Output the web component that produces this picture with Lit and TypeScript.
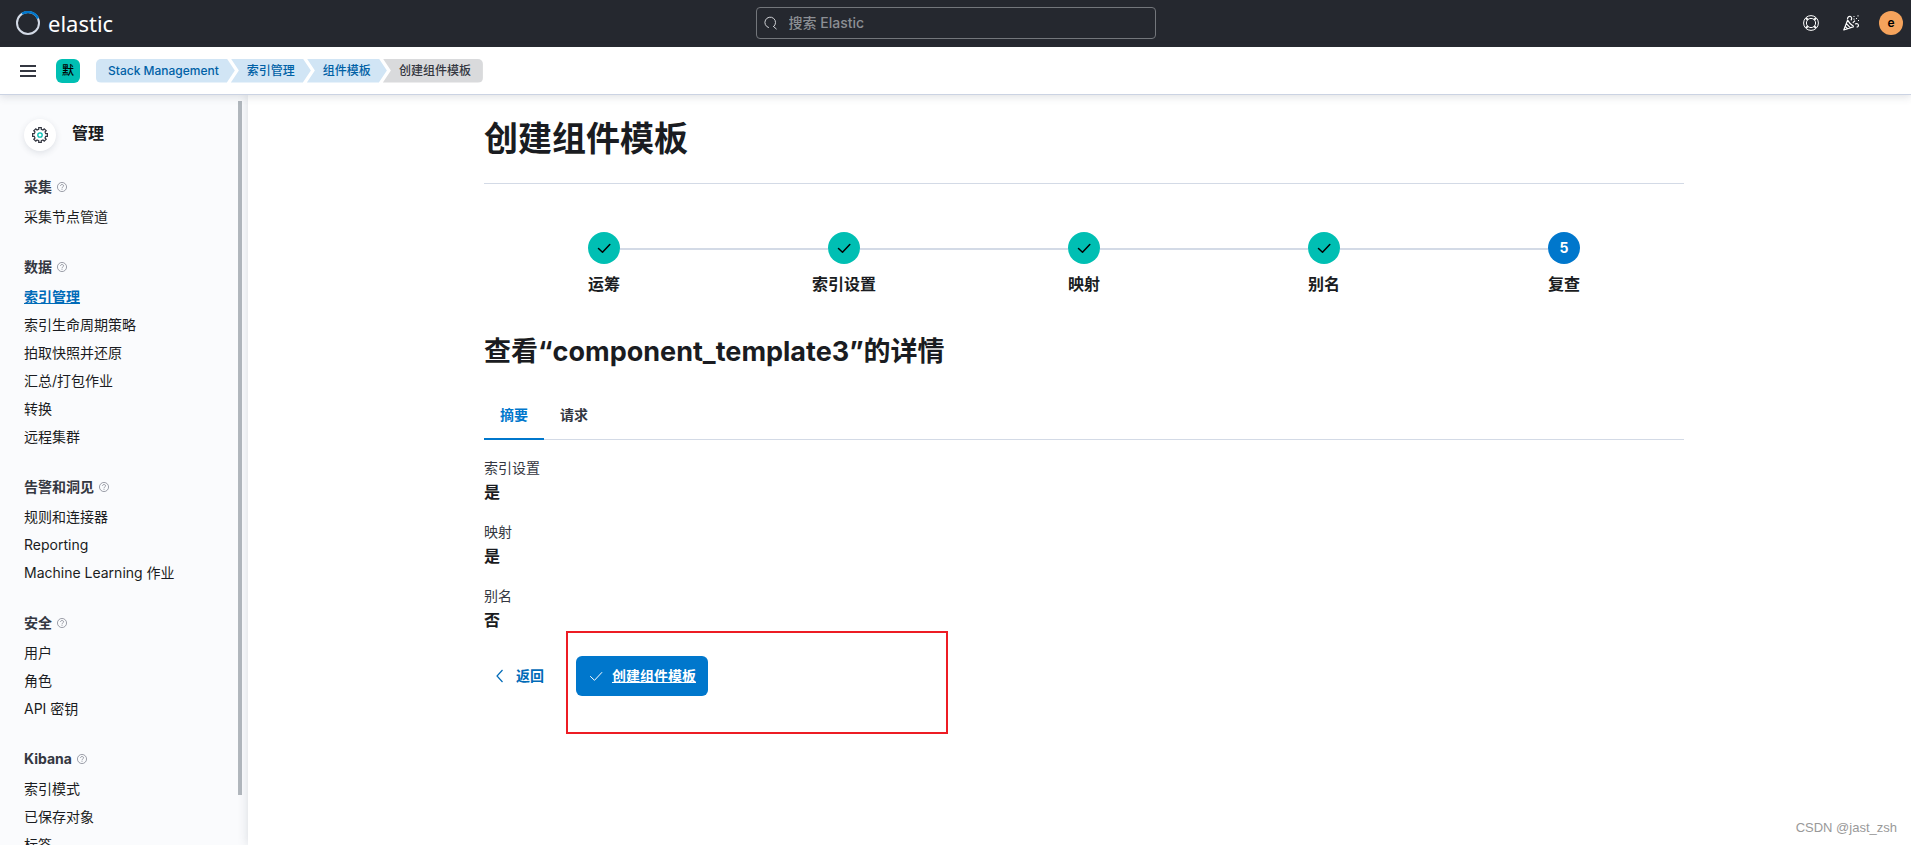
import { LitElement, html, css, svg, nothing } from "lit";
import { customElement } from "lit/decorators.js";
import { classMap } from "lit/directives/class-map.js";

interface NavSection {
  title: string;
  items: string[];
}

const CRUMBS = ["Stack Management", "索引管理", "组件模板", "创建组件模板"];

const SECTIONS: NavSection[] = [
  { title: "采集", items: ["采集节点管道"] },
  {
    title: "数据",
    items: ["索引管理", "索引生命周期策略", "拍取快照并还原", "汇总/打包作业", "转换", "远程集群"],
  },
  { title: "告警和洞见", items: ["规则和连接器", "Reporting", "Machine Learning 作业"] },
  { title: "安全", items: ["用户", "角色", "API 密钥"] },
  { title: "Kibana", items: ["索引模式", "已保存对象", "标签"] },
];

const STEPS = ["运筹", "索引设置", "映射", "别名", "复查"];

const SUMMARY = [
  ["索引设置", "是"],
  ["映射", "是"],
  ["别名", "否"],
];

const checkPath = svg`<path d="M2.5 8.500 6.500 12.300 13.800 4.500" fill="none" stroke="currentColor" stroke-linecap="round" stroke-linejoin="round"/>`;

const base = css`
  * {
    box-sizing: border-box;
    margin: 0;
    padding: 0;
  }
  button,
  input {
    font: inherit;
    color: inherit;
    background: none;
    border: 0;
  }
  a {
    color: inherit;
    text-decoration: none;
  }
  ul,
  ol {
    list-style: none;
  }
  svg {
    display: block;
    flex: none;
  }
`;

@customElement("kbn-header")
class KbnHeader extends LitElement {
  static styles = [
    base,
    css`
      :host {
        display: block;
        position: relative;
        z-index: 2;
      }
      .top {
        display: grid;
        grid-template-columns: 1fr 400px 1fr;
        align-items: center;
        height: 47px;
        padding: 0 8px 1px;
        background: #25282f;
        color: #fff;
      }
      .logo {
        display: flex;
        align-items: center;
        gap: 8px;
        padding-left: 8px;
        font: 22px/24px "Noto Sans", sans-serif;
      }
      .search {
        display: flex;
        align-items: center;
        gap: 11px;
        height: 32px;
        padding: 0 7px;
        border: 1px solid #73767b;
        border-radius: 4px;
      }
      .search input {
        flex: 1;
        min-width: 0;
        outline: 0;
        font-weight: 500;
      }
      .search input::placeholder {
        color: #8c8f94;
        opacity: 1;
      }
      .actions {
        display: flex;
        justify-content: flex-end;
        align-items: center;
        gap: 24px;
      }
      .actions button {
        display: block;
      }
      .actions .user {
        width: 24px;
        height: 24px;
        margin-left: -4px;
        border-radius: 50%;
        background: #f5a35c;
        color: #000;
        font-size: 12px;
        line-height: 24px;
        font-weight: 600;
      }
      .bar {
        display: flex;
        align-items: center;
        height: 48px;
        padding: 0 20px;
        background: #fff;
        border-bottom: 1px solid #cbd3e3;
        box-shadow: 0 2px 8px rgba(60, 70, 90, 0.16);
      }
      .space {
        width: 24px;
        height: 24px;
        margin: 0 16px 0 20px;
        border-radius: 6px;
        background: #00bfb3;
        color: #000;
        font-size: 12px;
        line-height: 24px;
        font-weight: 500;
      }
      .crumbs {
        display: flex;
        font-size: 12px;
        line-height: 24px;
        font-weight: 500;
      }
      .crumb {
        height: 24px;
        padding: 0 16px;
        margin-left: -4px;
        background: #d1e5f5;
        color: #0061a6;
        clip-path: polygon(0 0, calc(100% - 8px) 0, 100% 50%, calc(100% - 8px) 100%, 0 100%, 8px 50%);
      }
      .crumb.first {
        margin-left: 0;
        padding-left: 12px;
        border-radius: 5px 0 0 5px;
        clip-path: polygon(0 0, calc(100% - 8px) 0, 100% 50%, calc(100% - 8px) 100%, 0 100%);
      }
      .crumb.last {
        padding-right: 12px;
        border-radius: 0 5px 5px 0;
        background: #d9dadc;
        color: #343741;
        clip-path: polygon(0 0, 100% 0, 100% 100%, 0 100%, 8px 50%);
      }
    `,
  ];

  render() {
    const last = CRUMBS.length - 1;
    return html`
      <header>
        <div class="top">
          <a class="logo" href="#">
            <svg width="24" height="24" viewBox="0 0 24 24" fill="none" stroke-width="2">
              <circle cx="12" cy="12" r="11" stroke="#d3dae6" />
              <path d="M6 2.800A11 11 0 0 1 22 7.400" stroke="#0077cc" stroke-width="2.400" />
            </svg>
            elastic
          </a>
          <div class="search">
            <svg width="14" height="14" viewBox="0 0 14 14" fill="none" stroke="#d0d2d6">
              <path d="M4.900 11.600A5.300 5.300 0 1 1 9.400 10.700M9.200 10.200 12.600 13.200" />
            </svg>
            <input type="search" aria-label="搜索 Elastic" placeholder="搜索 Elastic" />
          </div>
          <div class="actions">
            <button aria-label="帮助">
              <svg width="16" height="16" viewBox="0 0 16 16" fill="none" stroke="#fff">
                <circle cx="8" cy="8" r="7.400" />
                <circle cx="8" cy="8" r="4.600" />
                <path stroke-width="2" d="m3.100 3.100 1.700 1.700m6.400 6.400 1.700 1.700m0-9.800-1.700 1.700m-6.400 6.400-1.700 1.700" />
              </svg>
            </button>
            <button aria-label="新闻">
              <svg width="16" height="16" viewBox="0 0 16 16" fill="none" stroke="#fff" stroke-width="1.200" stroke-linejoin="round">
                <path d="M4.600 5.100.8 15 10.800 11.600M4.600 5.100C6 7.600 8.200 10 10.800 11.600M3.400 8.600l4 4.300M2.200 11.400l2.600 2.600" />
                <path d="M4.400 4.400C4.500 2 6.200 .8 7.600 1.500 9 2.300 9 4 7.900 5.300M9.800 7.800 12 5.600M12 9c1.800-.8 3.300-.2 3.400 1.200.1 1.300-.8 1.900-1.800 1.800" />
                <path d="M10.500 1.500h1M14.500 .8h1M13 3.500h1M15 5.500h1M10.500 4.200h1" />
              </svg>
            </button>
            <button class="user" aria-label="用户菜单">e</button>
          </div>
        </div>
        <div class="bar">
          <button aria-label="菜单">
            <svg width="16" height="12" viewBox="0 0 16 12" fill="#343741">
              <path d="M0 0h16v2H0zM0 5h16v2H0zM0 10h16v2H0z" />
            </svg>
          </button>
          <button class="space">默</button>
          <nav class="crumbs" aria-label="Breadcrumbs">
            ${CRUMBS.map((c, i) => {
              const cls = classMap({ crumb: true, first: i === 0, last: i === last });
              return i === last
                ? html`<span class=${cls} aria-current="page">${c}</span>`
                : html`<a class=${cls} href="#">${c}</a>`;
            })}
          </nav>
        </div>
      </header>
    `;
  }
}

@customElement("kbn-side-nav")
class KbnSideNav extends LitElement {
  static styles = [
    base,
    css`
      :host {
        display: block;
        position: relative;
        width: 248px;
        flex: none;
        background: #fafbfd;
      }
      .scroll {
        height: 100%;
        padding: 24px;
        overflow: hidden auto;
        scrollbar-width: none;
      }
      .head {
        display: flex;
        gap: 16px;
        margin-bottom: 20px;
      }
      .badge {
        display: grid;
        place-items: center;
        width: 32px;
        height: 32px;
        border-radius: 50%;
        background: #fff;
        box-shadow: 0 2px 6px rgba(60, 70, 90, 0.14);
      }
      h2 {
        font-size: 16px;
        line-height: 28px;
        font-weight: 600;
        color: #1a1c21;
      }
      section {
        margin-bottom: 20px;
      }
      h3 {
        display: flex;
        align-items: center;
        gap: 5px;
        font-size: 14px;
        line-height: 32px;
        font-weight: 700;
        color: #343741;
      }
      li {
        line-height: 28px;
        color: #1a1c21;
      }
      .selected {
        font-weight: 600;
        color: #006bb8;
        text-decoration: underline;
      }
      .thumb {
        position: absolute;
        top: 6px;
        bottom: 50px;
        right: 6px;
        width: 4px;
        background: #b2b8be;
      }
    `,
  ];

  render() {
    return html`
      <nav class="scroll" aria-label="管理">
        <div class="head">
          <span class="badge">
            <svg width="16" height="16" viewBox="0 0 16 16" fill="none" stroke="#343741" stroke-width="1.200">
              <path d="M6.700 .6h2.600v1.700l1.700.7 1.200-1.200 2 2L13 5l.7 1.700h1.700v2.600h-1.700L13 11l1.200 1.200-2 2L11 13l-1.700.7v1.700H6.700v-1.700L5 13l-1.200 1.200-2-2L3 11l-.7-1.700H.6V6.700h1.700L3 5 1.800 3.800l2-2L5 3l1.700-.7z" />
              <circle cx="8" cy="8" r="2.200" stroke="#00bfb3" stroke-width="1.300" />
            </svg>
          </span>
          <h2>管理</h2>
        </div>
        ${SECTIONS.map(
          (s) => html`
            <section>
              <h3>
                ${s.title}
                <svg width="10" height="10" viewBox="0 0 16 16" fill="none" stroke="#7d828d" stroke-width="1.200">
                  <circle cx="8" cy="8" r="7.300" />
                  <path d="M5.500 6.300C5.600 3.200 10.500 3.300 10.500 6.100 10.500 7.900 8 7.800 8 10M8 11v1.500" />
                </svg>
              </h3>
              <ul>
                ${s.items.map(
                  (t) => html`<li>
                    <a href="#" class=${t === "索引管理" ? "selected" : nothing}>${t}</a>
                  </li>`
                )}
              </ul>
            </section>
          `
        )}
      </nav>
      <div class="thumb"></div>
    `;
  }
}

@customElement("kbn-template-wizard")
class KbnTemplateWizard extends LitElement {
  static styles = [
    base,
    css`
      :host {
        display: block;
        position: relative;
        z-index: 1;
        flex: 1;
        min-width: 0;
        padding: 20px 16px 0 25px;
        background: #fff;
        color: #343741;
        box-shadow: 0 0 10px rgba(60, 70, 90, 0.18);
      }
      .page {
        max-width: 1200px;
        margin: 0 auto;
      }
      h1,
      h2 {
        color: #1a1c21;
        font-weight: 700;
      }
      h1 {
        font-size: 34px;
        line-height: 48px;
        padding-bottom: 20px;
        border-bottom: 1px solid #d3dae6;
      }
      .steps {
        display: grid;
        grid-template-columns: repeat(5, 1fr);
        padding: 48px 0 36px;
      }
      .step {
        position: relative;
        display: flex;
        flex-direction: column;
        align-items: center;
        gap: 8px;
        font-size: 16px;
        line-height: 24px;
        font-weight: 600;
        color: #1a1c21;
      }
      .step + .step::before {
        content: "";
        position: absolute;
        top: 16px;
        right: calc(50% + 16px);
        width: calc(100% - 32px);
        height: 2px;
        background: #d3dae6;
      }
      .dot {
        display: grid;
        place-items: center;
        width: 32px;
        height: 32px;
        border-radius: 50%;
        background: #00bfb3;
        color: #000;
        font-size: 14px;
      }
      .dot.current {
        background: #0077cc;
        color: #fff;
        font-weight: 700;
      }
      h2 {
        font-size: 27px;
        line-height: 40px;
      }
      .tabs {
        display: flex;
        height: 48px;
        margin-top: 20px;
        border-bottom: 1px solid #d3dae6;
        font-weight: 600;
      }
      .tab {
        height: 48px;
        padding: 0 16px;
        border-bottom: 2px solid transparent;
      }
      .tab.on {
        border-color: #0077cc;
        color: #0077cc;
      }
      dl {
        padding-top: 16px;
      }
      dt {
        line-height: 24px;
      }
      dd {
        margin-bottom: 16px;
        font-size: 16px;
        line-height: 24px;
        font-weight: 600;
        color: #1a1c21;
      }
      .buttons {
        position: relative;
        display: flex;
        gap: 20px;
        padding-top: 8px;
      }
      .buttons button {
        display: flex;
        align-items: center;
        gap: 8px;
        height: 40px;
        font-weight: 600;
      }
      .back {
        padding: 0 12px 0 8px;
        color: #006bb8;
      }
      .buttons .create {
        padding: 0 12px;
        border-radius: 6px;
        background: #0077cc;
        color: #fff;
        text-decoration: underline;
      }
      .marker {
        position: absolute;
        top: -17px;
        left: 82px;
        width: 382px;
        height: 103px;
        border: 2px solid #ed1c24;
        pointer-events: none;
      }
    `,
  ];

  render() {
    return html`
      <main class="page">
        <h1>创建组件模板</h1>
        <ol class="steps">
          ${STEPS.map((label, i) => {
            const current = i === STEPS.length - 1;
            return html`<li class="step">
              <span class=${classMap({ dot: true, current })}>
                ${current
                  ? i + 1
                  : html`<svg width="16" height="16" viewBox="0 0 16 16" stroke-width="1.500">${checkPath}</svg>`}
              </span>
              ${label}
            </li>`;
          })}
        </ol>
        <h2>查看“component_template3”的详情</h2>
        <div class="tabs" role="tablist">
          <button class="tab on" role="tab" aria-selected="true">摘要</button>
          <button class="tab" role="tab" aria-selected="false">请求</button>
        </div>
        <dl>
          ${SUMMARY.map(([k, v]) => html`<dt>${k}</dt><dd>${v}</dd>`)}
        </dl>
        <div class="buttons">
          <button class="back">
            <svg width="16" height="16" viewBox="0 0 16 16" fill="none" stroke="currentColor" stroke-width="1.200">
              <path d="M10.500 2 5 8l5.500 6" />
            </svg>
            返回
          </button>
          <button class="create">
            <svg width="16" height="16" viewBox="0 0 16 16">${checkPath}</svg>
            创建组件模板
          </button>
          <div class="marker"></div>
        </div>
      </main>
    `;
  }
}

@customElement("app-root")
class AppRoot extends LitElement {
  static styles = css`
    :host {
      display: flex;
      flex-direction: column;
      position: relative;
      height: 100vh;
      overflow: hidden;
      font: 14px/24px Inter, "Noto Sans CJK SC", sans-serif;
    }
    .body {
      display: flex;
      flex: 1;
      min-height: 0;
    }
    .watermark {
      position: absolute;
      z-index: 3;
      right: 14px;
      bottom: 5px;
      font: 13px/24px "Liberation Sans", sans-serif;
      color: #999;
    }
  `;

  render() {
    return html`
      <kbn-header></kbn-header>
      <div class="body">
        <kbn-side-nav></kbn-side-nav>
        <kbn-template-wizard></kbn-template-wizard>
      </div>
      <div class="watermark">CSDN @jast_zsh</div>
    `;
  }
}
